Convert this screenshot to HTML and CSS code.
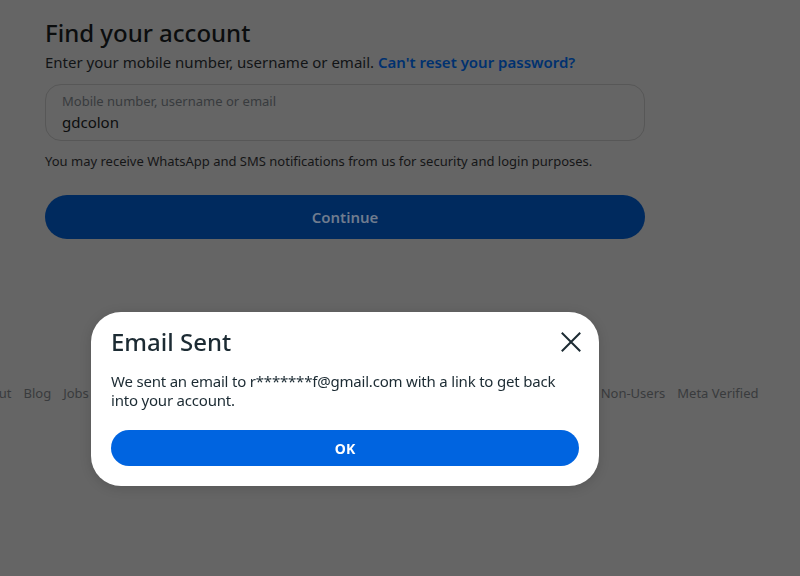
FILE: index.html
```html
<!DOCTYPE html>
<html lang="en">
<head>
<meta charset="utf-8">
<title>Find your account</title>
<link rel="stylesheet" href="styles.css">
</head>
<body>
<div class="page">
  <main class="content">
    <h1 class="title">Find your account</h1>
    <p class="subtitle">Enter your mobile number, username or email. <a class="link" href="#">Can't reset your password?</a></p>
    <div class="field">
      <span class="field-label">Mobile number, username or email</span>
      <span class="field-value">gdcolon</span>
    </div>
    <p class="note">You may receive WhatsApp and SMS notifications from us for security and login purposes.</p>
    <button class="continue">Continue</button>
    <footer class="footer">
      <a>Meta</a><a>About</a><a>Blog</a><a>Jobs</a><a>API</a><a>Privacy</a><a>Terms</a><a>Locations</a><a>Instagram Lite</a><a>Threads</a><a>Contact Uploading &amp; Non-Users</a><a>Meta Verified</a>
    </footer>
  </main>
</div>
<div class="overlay">
  <div class="dialog">
    <div class="dialog-head">
      <h2 class="dialog-title">Email Sent</h2>
      <button class="close" aria-label="Close">
        <svg width="20" height="20" viewBox="0 0 20 20"><path d="M1.5 1.5 L18.5 18.5 M18.5 1.5 L1.5 18.5" stroke="#1c2b33" stroke-width="2" fill="none" stroke-linecap="square"/></svg>
      </button>
    </div>
    <p class="dialog-text">We sent an email to r*******f@gmail.com with a link to get back into your account.</p>
    <button class="ok">OK</button>
  </div>
</div>
</body>
</html>
```

FILE: styles.css
```css
html, body {
  margin: 0;
  padding: 0;
  height: 100%;
  overflow: hidden;
}
body {
  background: #656565;
  font-family: "Noto Sans", "Open Sans", sans-serif;
  color: #0c0e10;
}
.page {
  padding-left: 45px;
}
.content {
  width: 600px;
  display: flex;
  flex-direction: column;
}
.title {
  margin: 17px 0 0;
  font-size: 24px;
  line-height: 32px;
  font-weight: 500;
  color: #0b0d0e;
}
.subtitle {
  margin: 3px 0 0;
  font-size: 15px;
  line-height: 20px;
  color: #121416;
}
.link {
  color: #00316f;
  font-weight: 600;
  text-decoration: none;
}
.field {
  margin-top: 12px;
  height: 55px;
  border: 1px solid #575757;
  border-radius: 16px;
  padding: 0 16px;
  display: flex;
  flex-direction: column;
  justify-content: center;
}
.field-label {
  font-size: 13px;
  line-height: 16px;
  color: #383b3e;
}
.field-value {
  font-size: 15px;
  line-height: 20px;
  margin-top: 3px;
  color: #0c0d0e;
  font-weight: 400;
}
.note {
  margin: 12px 0 0;
  font-size: 13px;
  line-height: 16px;
  color: #151617;
}
.continue {
  margin-top: 26px;
  height: 44px;
  width: 600px;
  border: none;
  border-radius: 22px;
  background: #002a5e;
  color: #6f7c8e;
  font-family: inherit;
  font-size: 15px;
  font-weight: 600;
}
.footer {
  margin-top: 145px;
  display: flex;
  justify-content: center;
  gap: 12px;
  white-space: nowrap;
  font-size: 13px;
  line-height: 18px;
  color: #393b3d;
}
.overlay {
  position: fixed;
  inset: 0;
}
.dialog {
  margin: 312px 0 0 91px;
  width: 508px;
  box-sizing: border-box;
  background: #ffffff;
  border-radius: 30px;
  padding: 14px 20px 20px;
  box-shadow: 0 2px 12px rgba(0, 0, 0, 0.15);
  display: flex;
  flex-direction: column;
}
.dialog-head {
  display: flex;
  align-items: center;
  justify-content: space-between;
}
.dialog-title {
  margin: 0;
  font-size: 24px;
  line-height: 32px;
  font-weight: 500;
  color: #1c2b33;
}
.close {
  border: none;
  background: none;
  padding: 0;
  margin-right: -2px;
  display: flex;
  width: 20px;
  height: 20px;
}
.dialog-text {
  margin: 14px 0 0;
  font-size: 15px;
  line-height: 19px;
  letter-spacing: -0.2px;
  color: #1c2b33;
}
.ok {
  margin-top: 20px;
  height: 36px;
  border: none;
  border-radius: 18px;
  background: #0064e0;
  color: #ffffff;
  font-family: inherit;
  font-size: 14px;
  font-weight: 700;
}
```
